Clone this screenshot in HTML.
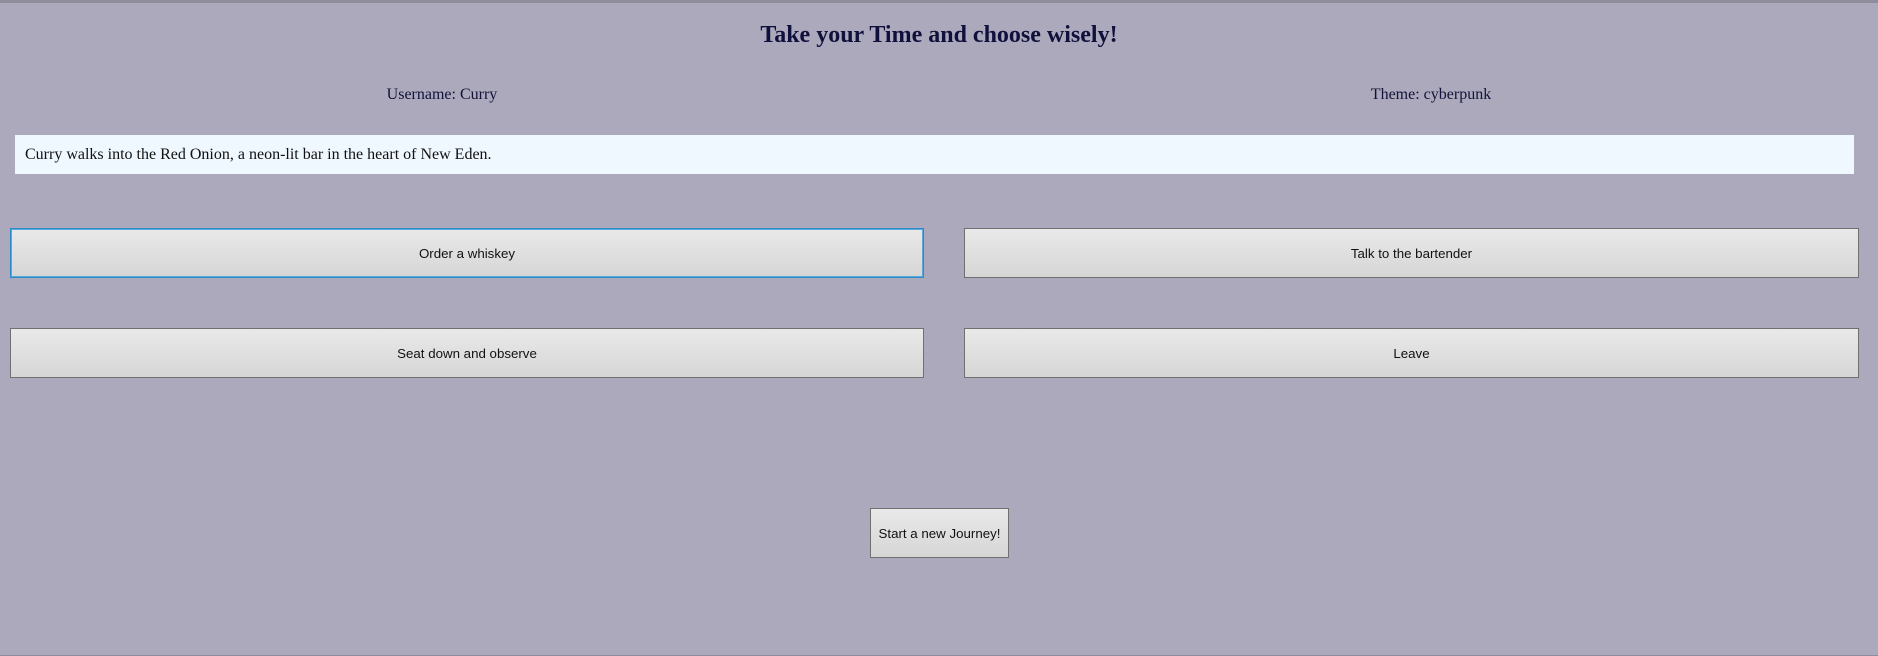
<!DOCTYPE html>
<html><head><style>
html,body{margin:0;padding:0}
body{width:1878px;height:656px;background:#aba9bb;position:relative;overflow:hidden;font-family:"Liberation Serif",serif;color:#12123a}
.top{position:absolute;left:0;top:0;width:1878px;height:3px;background:#8f8d9c}
.bot{position:absolute;left:0;bottom:0;width:1878px;height:1px;background:#8f8d9c}
h1{position:absolute;top:22px;left:0;width:1878px;text-align:center;margin:0;font-size:24px;font-weight:bold;color:#10103c}
.u{position:absolute;top:86px;font-size:16px;text-align:center;width:400px}
.story{position:absolute;left:15px;top:135px;width:1839px;height:39px;background:#f0f8ff;font-size:16px;line-height:39px;box-sizing:border-box;padding-left:10px;color:#111}
.b{position:absolute;box-sizing:border-box;border:1px solid #707070;background:linear-gradient(#e9e9e9,#d6d6d6);font-family:"Liberation Sans",sans-serif;font-size:13.3px;color:#111;display:flex;align-items:center;justify-content:center}
.f{border:1px solid #2a8bc8;box-shadow:0 0 0 1px #5aa9da inset}
</style></head><body>
<div class="top"></div>
<h1>Take your Time and choose wisely!</h1>
<div class="u" style="left:242px">Username: Curry</div>
<div class="u" style="left:1231px">Theme: cyberpunk</div>
<div class="story">Curry walks into the Red Onion, a neon-lit bar in the heart of New Eden.</div>
<div class="b f" style="left:10px;top:228px;width:914px;height:50px">Order a whiskey</div>
<div class="b" style="left:964px;top:228px;width:895px;height:50px">Talk to the bartender</div>
<div class="b" style="left:10px;top:328px;width:914px;height:50px">Seat down and observe</div>
<div class="b" style="left:964px;top:328px;width:895px;height:50px">Leave</div>
<div class="b" style="left:870px;top:508px;width:139px;height:50px;font-size:13.3px">Start a new Journey!</div>
<div class="bot"></div>
</body></html>
